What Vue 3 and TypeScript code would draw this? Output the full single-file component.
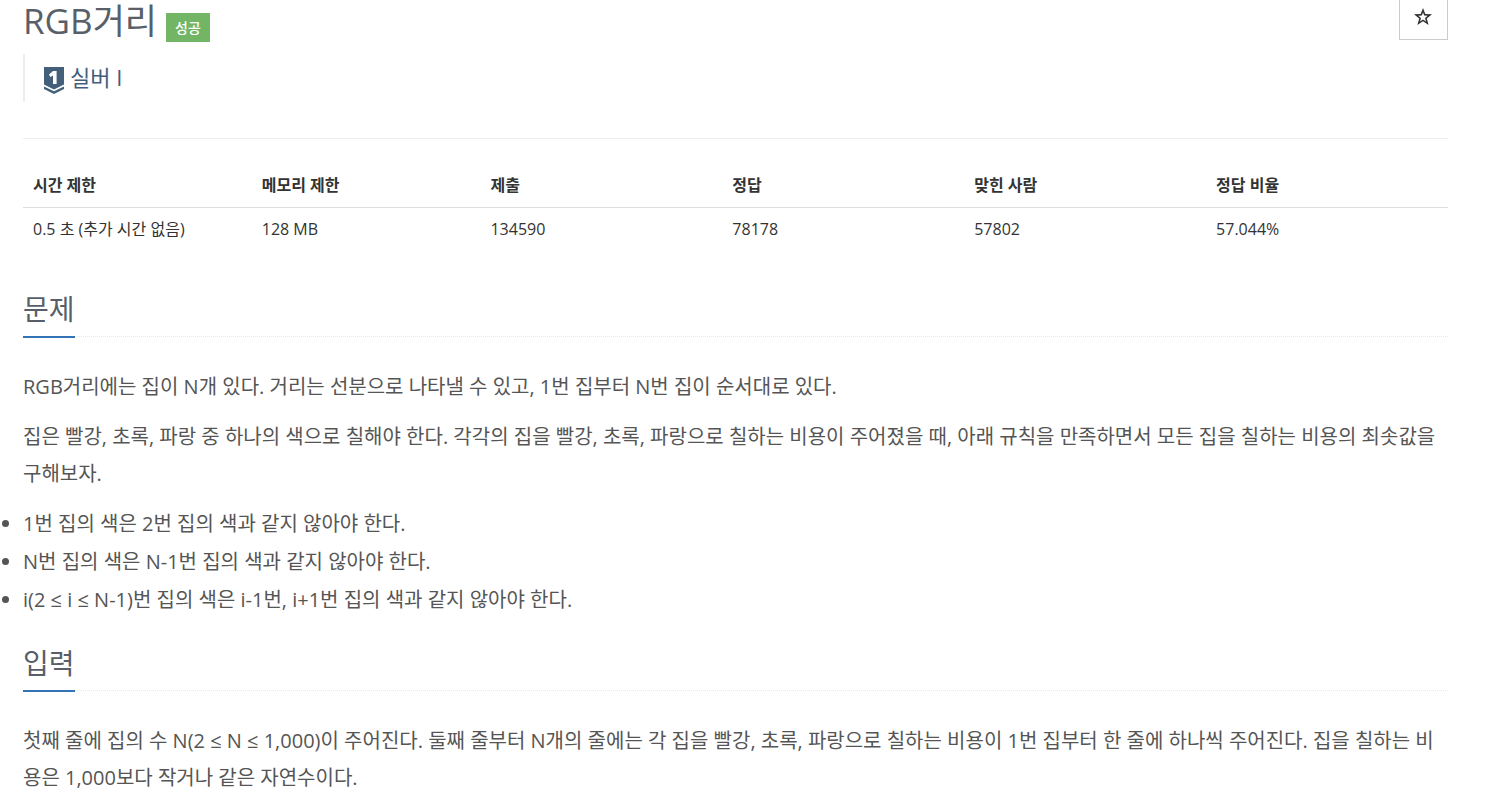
<script setup lang="ts">
interface Stat {
  label: string
  value: string
}

const stats: Stat[] = [
  { label: '시간 제한', value: '0.5 초 (추가 시간 없음)' },
  { label: '메모리 제한', value: '128 MB' },
  { label: '제출', value: '134590' },
  { label: '정답', value: '78178' },
  { label: '맞힌 사람', value: '57802' },
  { label: '정답 비율', value: '57.044%' },
]

const description: string[] = [
  'RGB거리에는 집이 N개 있다. 거리는 선분으로 나타낼 수 있고, 1번 집부터 N번 집이 순서대로 있다.',
  '집은 빨강, 초록, 파랑 중 하나의 색으로 칠해야 한다. 각각의 집을 빨강, 초록, 파랑으로 칠하는 비용이 주어졌을 때, 아래 규칙을 만족하면서 모든 집을 칠하는 비용의 최솟값을 구해보자.',
]

const rules: string[] = [
  '1번 집의 색은 2번 집의 색과 같지 않아야 한다.',
  'N번 집의 색은 N-1번 집의 색과 같지 않아야 한다.',
  'i(2 ≤ i ≤ N-1)번 집의 색은 i-1번, i+1번 집의 색과 같지 않아야 한다.',
]

const input =
  '첫째 줄에 집의 수 N(2 ≤ N ≤ 1,000)이 주어진다. 둘째 줄부터 N개의 줄에는 각 집을 빨강, 초록, 파랑으로 칠하는 비용이 1번 집부터 한 줄에 하나씩 주어진다. 집을 칠하는 비용은 1,000보다 작거나 같은 자연수이다.'
</script>

<template>
  <main class="problem" lang="ko">
    <header class="top">
      <div class="title-row">
        <h1>RGB거리</h1>
        <span class="result">성공</span>
      </div>
      <button class="favorite" type="button" aria-label="즐겨찾기">
        <svg viewBox="0 0 18 18" width="18" height="18" aria-hidden="true">
          <path
            fill-rule="evenodd"
            d="M9 0 L11.3 6 L18 6.3 L12.8 10.4 L14.6 17 L9 13.2 L3.4 17 L5.2 10.4 L0 6.3 L6.7 6 Z M9 4.4 L7.8 7.5 L4.3 7.7 L7 9.9 L6 13.4 L9 11.4 L12 13.4 L11 9.9 L13.7 7.7 L10.2 7.5 Z"
          />
        </svg>
      </button>
    </header>

    <blockquote class="tier">
      <svg viewBox="0 0 20 27" width="20" height="27" aria-hidden="true">
        <path fill="#435f7a" d="M0 0H20V17.5L10 22.5L0 17.5Z" />
        <path fill="#435f7a" d="M0 19.5L10 24.3L20 19.5V22L10 27L0 22Z" />
        <path fill="#fff" d="M9 4H12.6V17H9V8.6L6.4 10L5 7.5Z" />
      </svg>
      <span>실버 I</span>
    </blockquote>

    <hr />

    <table class="stats">
      <thead>
        <tr>
          <th v-for="stat in stats" :key="stat.label" scope="col">{{ stat.label }}</th>
        </tr>
      </thead>
      <tbody>
        <tr>
          <td v-for="stat in stats" :key="stat.label">{{ stat.value }}</td>
        </tr>
      </tbody>
    </table>

    <section>
      <div class="headline"><h2>문제</h2></div>
      <p v-for="text in description" :key="text">{{ text }}</p>
      <ul>
        <li v-for="rule in rules" :key="rule">{{ rule }}</li>
      </ul>
    </section>

    <section>
      <div class="headline"><h2>입력</h2></div>
      <p>{{ input }}</p>
    </section>
  </main>
</template>

<style>
body {
  background: #fff;
}
</style>

<style scoped>
.problem {
  margin: 0 63px 0 23px;
  color: #555;
  font-family: 'Open Sans', 'Noto Sans CJK KR', sans-serif;
  font-size: 20px;
  line-height: 37px;
}

.top {
  display: flex;
  justify-content: space-between;
  align-items: flex-start;
}

.title-row {
  display: flex;
  align-items: flex-end;
  gap: 9px;
}

h1 {
  margin: 0;
  color: #585f69;
  font-size: 35px;
  font-weight: 400;
  line-height: 41px;
}

.result {
  margin-bottom: -1px;
  padding: 0 9px;
  background: #72b565;
  color: #fff;
  font-size: 14px;
  font-weight: 500;
  line-height: 29px;
}

.favorite {
  box-sizing: border-box;
  display: flex;
  align-items: center;
  justify-content: center;
  width: 49px;
  height: 40px;
  padding: 0 2px 6px 0;
  border: 1px solid #ccc;
  border-top: 0;
  background: #fff;
}

.favorite path {
  fill: #333;
}

.tier {
  display: flex;
  align-items: flex-start;
  gap: 6px;
  height: 48px;
  margin: 13px 0 36px;
  padding-left: 19px;
  border-left: 2px solid #eee;
  color: #435f7a;
  font-size: 22px;
  line-height: 46px;
}

.tier svg {
  margin-top: 13px;
}

hr {
  margin: 0 0 25px;
  border: 0;
  border-top: 1px solid #eee;
}

.stats {
  width: 100%;
  margin-bottom: 38px;
  border-collapse: collapse;
  table-layout: fixed;
  color: #333;
  font-size: 16px;
  line-height: 23px;
}

.stats th,
.stats td {
  width: 17%;
  padding: 10px;
  text-align: left;
}

.stats th:nth-child(-n + 2) {
  width: 16%;
}

.stats th {
  border-bottom: 1px solid #ddd;
  font-weight: 700;
}

.headline {
  display: flex;
  margin: 24px 0 31px;
  border-bottom: 1px dotted #e4e9f0;
}

h2 {
  margin: 0 0 -2px;
  padding-bottom: 7px;
  border-bottom: 2px solid #3273b5;
  color: #585f69;
  font-size: 28px;
  font-weight: 400;
  line-height: 40px;
}

p {
  margin: 0 0 13px;
}

ul {
  margin: 0;
  padding: 0;
  line-height: 38px;
}
</style>
